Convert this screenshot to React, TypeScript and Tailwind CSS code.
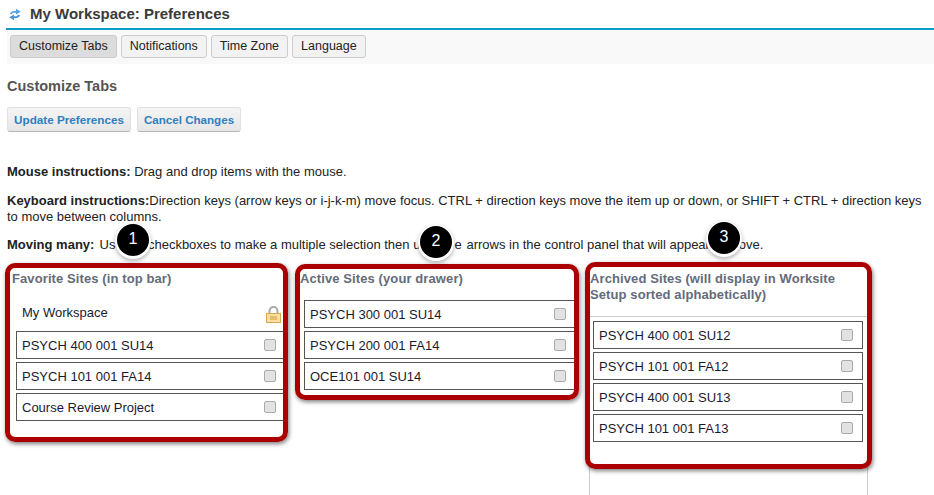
import React from "react";

// --- DATA ---
const favorites = ["PSYCH 400 001 SU14", "PSYCH 101 001 FA14", "Course Review Project"];
const active = ["PSYCH 300 001 SU14", "PSYCH 200 001 FA14", "OCE101 001 SU14"];
const archived = ["PSYCH 400 001 SU12", "PSYCH 101 001 FA12", "PSYCH 400 001 SU13", "PSYCH 101 001 FA13"];
const tabs = ["Customize Tabs", "Notifications", "Time Zone", "Language"];

const SiteRow: React.FC<{ label: string }> = ({ label }) => (
    <div className="flex h-[28px] items-center justify-between border border-[#555] bg-white pl-[5px] pr-[9px] text-[13px] text-[#1a1a2e]">
        <span className="pt-[2px]">{label}</span>
        <span className="mb-[1px] h-[12px] w-[12px] rounded-[2px] border border-[#aaa] bg-[#e2e2e2]" />
    </div>
);

const ActionButton: React.FC<{ label: string; className: string }> = ({ label, className }) => (
    <div className={`flex h-[25px] items-center justify-center rounded-[3px] border border-[#e0e0e0] border-b-[#b5b5b5] bg-gradient-to-b from-[#f5f5f5] to-[#e6e6e6] font-bold text-[#2f80c0] ${className}`}>
        {label}
    </div>
);

const Callout: React.FC<{ className: string }> = ({ className }) => (
    <div className={`absolute rounded-[10px] border-[5px] border-[#aa0000] shadow-[1px_2px_4px_rgba(0,0,0,0.5)] ${className}`} />
);

const Badge: React.FC<{ n: number; className: string }> = ({ n, className }) => (
    <div className={`absolute flex h-[32px] w-[32px] items-center justify-center rounded-full bg-black pb-[3px] text-[16px] text-white shadow-[0_1px_0_2px_#fff,0_3px_4px_2px_rgba(0,0,0,0.3)] ${className}`}>
        {n}
    </div>
);

const App: React.FC = () => {
    return (
        <div className="relative h-[495px] w-[934px] overflow-hidden bg-white font-['Liberation_Sans',Arial,sans-serif] text-[13px] text-[#222]">
            {/* Title */}
            <div className="ml-[6px] flex h-[28px] items-center gap-[9px] pl-[3px]">
                <svg width="12" height="13" viewBox="0 0 12 13" fill="none">
                    <path d="M1 6 C1.5 3.4 4 2.6 7 3 L7 0.8 L11.8 3.8 L7 6.4 L7 4.8 C5 4.5 3.6 4.8 3 6.2 Z" fill="#5aa3e2" />
                    <path d="M11 7 C10.5 9.6 8 10.4 5 10 L5 12.2 L0.2 9.2 L5 6.6 L5 8.2 C7 8.5 8.4 8.2 9 6.8 Z" fill="#4f94d4" />
                </svg>
                <h1 className="text-[15px] font-bold text-[#3a3a3a]">My Workspace: Preferences</h1>
            </div>
            <div className="ml-[6px] h-[2px] bg-[#0d9ec7]" />

            {/* Tabs */}
            <div className="ml-[7px] flex h-[34px] items-start gap-[4px] bg-[#f9f9f9] pl-[3px] pt-[5px]">
                {tabs.map((t, i) => (
                    <div
                        key={t}
                        className={`flex h-[23px] items-center rounded-[3px] border border-[#ccc] px-[8px] text-[12.5px] text-[#222] ${i === 0 ? "bg-[#dcdcdc]" : "bg-[#f2f2f2]"}`}
                    >
                        {t}
                    </div>
                ))}
            </div>

            {/* Section heading and actions */}
            <h2 className="ml-[7px] mt-[14px] text-[14.5px] font-bold leading-[16px] text-[#555]">Customize Tabs</h2>
            <div className="ml-[7px] mt-[13px] flex gap-[6px]">
                <ActionButton label="Update Preferences" className="w-[124px] text-[11.7px]" />
                <ActionButton label="Cancel Changes" className="w-[104px] text-[11.6px]" />
            </div>

            {/* Instructions */}
            <div className="ml-[7px] mt-[32px] w-[920px] leading-[16px]">
                <p>
                    <b>Mouse instructions:</b> Drag and drop items with the mouse.
                </p>
                <p className="mt-[13px]">
                    <b>Keyboard instructions:</b>Direction keys (arrow keys or i-j-k-m) move focus. CTRL + direction keys move the item up or down, or SHIFT + CTRL + direction keys to move between columns.
                </p>
                <p className="mt-[12px]">
                    <b className="mr-[1.5px]">Moving many:</b> Use the checkboxes to make a multiple selection then <span className="tracking-[1px]">use the</span> arrows in the control panel that will appear to move.
                </p>
            </div>

            {/* Columns */}
            <div className="mt-[16px] flex items-start">
                <section className="ml-[12px] w-[274px]">
                    <h3 className="h-[33px] text-[13px] font-bold tracking-[0.1px] text-[#646b7a]">Favorite Sites (in top bar)</h3>
                    <div className="ml-[4px] flex flex-col gap-[3px]">
                        <div className="flex h-[26px] items-start justify-between pl-[6px] pr-[5px] pt-[1px] text-[13px] text-[#1a1a2e]">
                            <span>My Workspace</span>
                            <svg className="mt-[3px]" width="15" height="17" viewBox="0 0 15 17" fill="none">
                                <path d="M3.5 8 V5 a4 4 0 0 1 8 0 V8" stroke="#aaaaaa" strokeWidth="2" />
                                <rect x="0.5" y="7.5" width="14" height="9" fill="#f8dfa4" stroke="#dba94c" />
                                <rect x="4" y="10" width="7" height="4" fill="#e8bd68" />
                            </svg>
                        </div>
                        {favorites.map((s) => (
                            <SiteRow key={s} label={s} />
                        ))}
                    </div>
                </section>

                <section className="ml-[14px] w-[276px]">
                    <h3 className="h-[31px] text-[13px] font-bold tracking-[0.1px] text-[#646b7a]">Active Sites (your drawer)</h3>
                    <div className="ml-[4px] flex flex-col gap-[3px]">
                        {active.map((s) => (
                            <SiteRow key={s} label={s} />
                        ))}
                    </div>
                </section>

                <section className="ml-[13px] h-[240px] w-[279px] border-x border-[#ccc]">
                    <h3 className="h-[48px] border-b border-[#ccc] pt-[2px] text-[13px] font-bold leading-[16px] tracking-[0.1px] text-[#646b7a]">
                        Archived Sites (will display in Worksite Setup sorted alphabetically)
                    </h3>
                    <div className="ml-[3px] mr-[4px] mt-[4px] flex flex-col gap-[3px]">
                        {archived.map((s) => (
                            <SiteRow key={s} label={s} />
                        ))}
                    </div>
                </section>
            </div>

            {/* Annotations */}
            <Callout className="left-[5px] top-[263px] h-[179px] w-[283px]" />
            <Callout className="left-[295px] top-[264px] h-[136px] w-[284px]" />
            <Callout className="left-[585px] top-[262px] h-[207px] w-[287px]" />
            <Badge n={1} className="left-[117px] top-[224px]" />
            <Badge n={2} className="left-[420px] top-[226px]" />
            <Badge n={3} className="left-[708px] top-[222px]" />
        </div>
    );
};

export default App;
